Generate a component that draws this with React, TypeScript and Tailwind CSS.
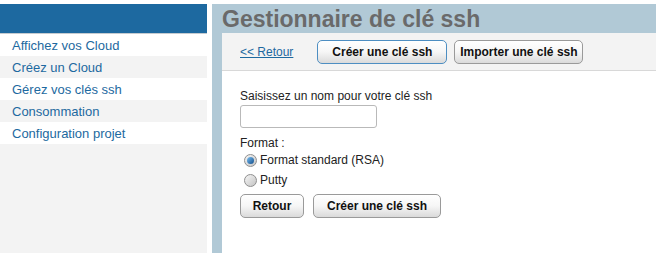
const menu = [
  "Affichez vos Cloud",
  "Créez un Cloud",
  "Gérez vos clés ssh",
  "Consommation",
  "Configuration projet",
];

function Button({ label, focused, width }: { label: string; focused?: boolean; width: string }) {
  return (
    <button
      className={
        "h-[24px] rounded-[5px] border bg-gradient-to-b from-white via-[#f6f6f6] to-[#dadada] text-[12px] font-bold text-[#111] overflow-hidden whitespace-nowrap shadow-[inset_0_1px_0_#fff] " +
        width +
        (focused ? " border-[#4d8ec2]" : " border-[#9a9a9a]")
      }
    >
      {label}
    </button>
  );
}

function Radio({ checked, label }: { checked?: boolean; label: string }) {
  return (
    <label className="flex items-center h-[20px] pl-[4px] gap-[3px] text-[12px] text-[#222]">
      <span className="w-[13px] h-[13px] rounded-full border border-[#8f8f8f] bg-gradient-to-br from-[#f6f6f6] to-[#c4c4c4] flex items-center justify-center">
        {checked && (
          <span className="w-[7px] h-[7px] rounded-full bg-gradient-to-br from-[#7cc0f2] to-[#0d4f8c]" />
        )}
      </span>
      {label}
    </label>
  );
}

export default function App() {
  return (
    <div className="w-[656px] h-[253px] bg-white flex pt-[4px] overflow-hidden font-['Liberation_Sans',Arial,sans-serif]">
      {/* Sidebar */}
      <aside className="w-[207px] shrink-0 flex flex-col bg-[#f3f3f3]">
        <div className="h-[30px] bg-[#1d69a0] border-b border-[#c5cbd0]" />
        {menu.map((item, i) => (
          <div
            key={item}
            className={
              "h-[22px] flex items-center pl-[12px] pt-[2px] text-[13px] text-[#1d69a0] " +
              (i % 2 === 0 ? "bg-white" : "bg-[#f3f3f3]")
            }
          >
            {item}
          </div>
        ))}
      </aside>

      {/* Main */}
      <main className="ml-[5px] flex-1 bg-[#b1c9d6] flex flex-col min-w-0">
        <h1 className="h-[29px] pl-[10px] pt-[1px] flex items-center text-[23px] font-bold text-[#6a6a6a] whitespace-nowrap">
          Gestionnaire de clé ssh
        </h1>
        <div className="ml-[10px] flex-1 bg-white">
          <div className="h-[38px] bg-[#f3f3f3] border-b border-[#d8d8d8] flex items-center pl-[18px]">
            <a href="#" className="text-[12px] text-[#1d69a0] underline mr-[24px]">
              &lt;&lt; Retour
            </a>
            <Button label="Créer une clé ssh" focused width="w-[130px]" />
            <div className="w-[7px]" />
            <Button label="Importer une clé ssh" width="w-[129px]" />
          </div>

          <form className="pl-[18px] flex flex-col items-start text-[12px] text-[#222]">
            <div className="mt-[18px] leading-[14px]">Saisissez un nom pour votre clé ssh</div>
            <input
              type="text"
              className="mt-[2px] w-[137px] h-[23px] rounded-[3px] border border-[#b9b9b9] bg-white"
            />
            <div className="mt-[8px] leading-[14px]">Format :</div>
            <Radio checked label="Format standard (RSA)" />
            <Radio label="Putty" />
            <div className="mt-[4px] flex gap-[9px]">
              <Button label="Retour" width="w-[64px]" />
              <Button label="Créer une clé ssh" width="w-[128px]" />
            </div>
          </form>
        </div>
      </main>
    </div>
  );
}
